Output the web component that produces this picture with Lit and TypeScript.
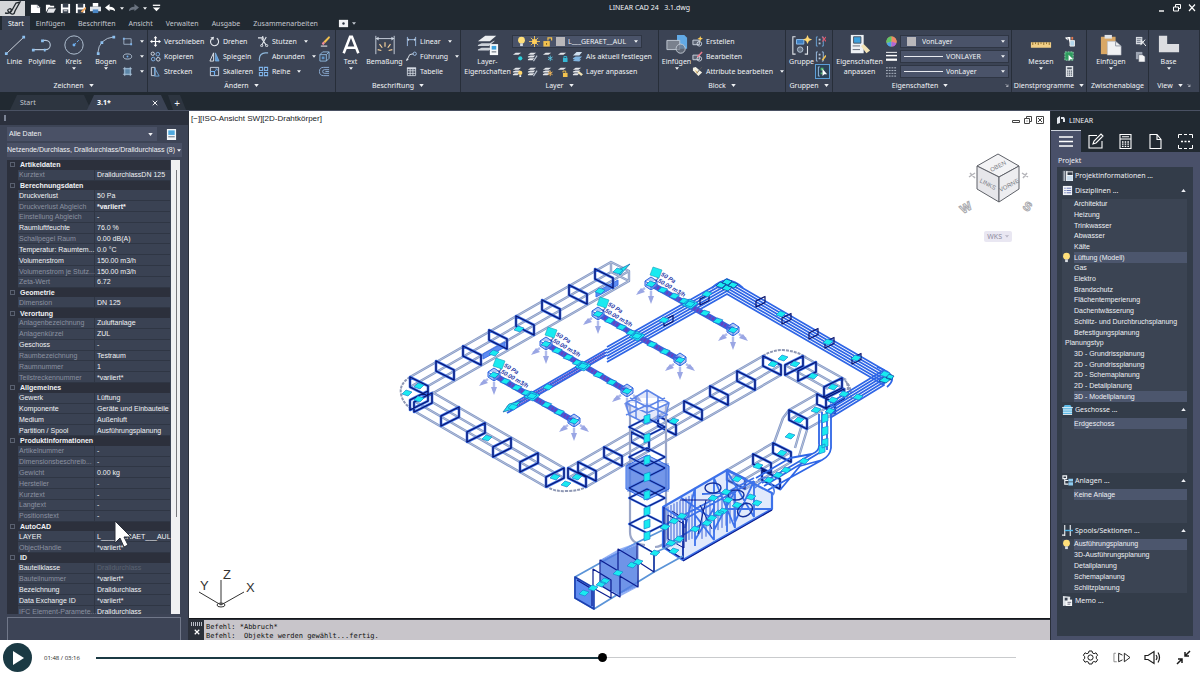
import { LitElement, html, svg, css, nothing, SVGTemplateResult } from "lit";
import { customElement, property, state } from "lit/decorators.js";
import { classMap } from "lit/directives/class-map.js";
import { styleMap } from "lit/directives/style-map.js";

/* ---------- icons ---------- */

const sheets = svg`<path d="M1 4l3-2h6l-3 2zM1 6l3-1h5l-2 2H1zM1 9l2-1h5l-2 2H1z" fill="#e4e6ea"/>`;

const SMALL: Record<string, SVGTemplateResult> = {
  rect: svg`<path d="M2 3h8v6H2z" fill="none" stroke="#9fb0c6"/><path d="M1 2h2v2H1zM9 8h2v2H9z" fill="#7fb4ea"/>`,
  ellipse: svg`<ellipse cx="6" cy="6" rx="4.5" ry="2.8" fill="none" stroke="#b8c8da"/><circle cx="6" cy="6" r="1" fill="#6fb0f0"/>`,
  hatch: svg`<path d="M2 2h8v8H2z" fill="#5b86a8"/><path d="M1 3h10M1 9h10M3 1v10M9 1v10" stroke="#b9cce0" stroke-width=".8"/>`,
  move: svg`<path d="M6 1.500v9M1.500 6h9" stroke="#fff" stroke-width="1.300"/><path d="M6 0l2 2.500H4zM6 12l2-2.500H4zM0 6l2.500-2v4zM12 6L9.500 4v4z" fill="#fff"/>`,
  copy: svg`<g fill="none"><circle cx="3" cy="3" r="1.800" stroke="#d5dbe4"/><circle cx="8.500" cy="3.500" r="2" stroke="#7fb4ea"/><circle cx="3.500" cy="8.800" r="2" stroke="#7fb4ea"/><circle cx="9" cy="9" r="2" stroke="#d5dbe4"/></g>`,
  stretch: svg`<path d="M1.500 1.500h4v9h-4z" fill="none" stroke="#cfd7e2"/><path d="M5 2l5 9H5z" fill="none" stroke="#6fa8dc"/>`,
  rotate: svg`<path d="M8.500 2.500A4.400 4.400 0 1 1 3 3" fill="none" stroke="#e4e8ee" stroke-width="1.200"/><path d="M1.500 1.500l4-.8-.8 3.800z" fill="#e4e8ee"/>`,
  mirror: svg`<path d="M5 2v9H1z" fill="none" stroke="#e4e8ee"/><path d="M7 2v9h4z" fill="#5c9ad6" stroke="#8cc0f0" stroke-width=".7"/>`,
  scale: svg`<path d="M1.500 1.500h9v9h-9z" fill="none" stroke="#cfd7e2"/><path d="M1.500 6h4.500v4.500" fill="none" stroke="#6fb0f0" stroke-width="1.300"/><path d="M6.500 5.500l2-2M7 3.200h2v2" stroke="#6fb0f0" fill="none" stroke-width=".8"/>`,
  trim: svg`<path d="M0 2h5M5 0l1 4M9 1L4 10M4 3l5 7" stroke="#e4e8ee" stroke-width="1.200"/><circle cx="4" cy="10.500" r="1.200" fill="none" stroke="#e4e8ee"/><circle cx="9.500" cy="10.500" r="1.200" fill="none" stroke="#e4e8ee"/>`,
  fillet: svg`<path d="M1.500 11V8Q2 2.500 8 2h3" fill="none" stroke="#8fb8dc" stroke-width="1.200"/>`,
  array: svg`<path d="M1.500 1.500h3.500v3.500H1.500zM7 1.500h3.500v3.500H7zM1.500 7h3.500v3.500H1.500zM7 7h3.500v3.500H7z" fill="none" stroke="#7fb4ea" stroke-width="1.100"/>`,
  erase: svg`<path d="M11 0L5 6l1.500 2L12 2z" fill="#f2c14e"/><path d="M5 6l1.500 2-2 2L3 8z" fill="#f08a9a"/><path d="M2 11h7" stroke="#fff"/>`,
  explode: svg`<path d="M1 4h7v7H1zM1 4l3-3h7L8 4M11 1v7l-3 3" fill="none" stroke="#8fb9df"/><path d="M3 6h3v3H3z" fill="#5f93c5"/>`,
  offset: svg`<path d="M11 1.500H5a4 4 0 0 0 0 9h6M11 4H6a2 2 0 0 0 0 4h5M11 6H7" fill="none" stroke="#8fb0d8"/>`,
  dimlin: svg`<path d="M1.500 1v10M10.500 1v10M2 4h8" stroke="#9fc0e6" fill="none"/><path d="M3 2.500v3L1.500 4zM9 2.500v3L10.500 4z" fill="#e4e8ee"/>`,
  leader: svg`<path d="M1 10l3-6 4-1" fill="none" stroke="#e4e8ee"/><circle cx="9.500" cy="3" r="1.800" fill="none" stroke="#9fc0e6"/><path d="M0 11l1-3 2 1.500z" fill="#e4e8ee"/>`,
  table: svg`<path d="M1.500 2.500h9v8h-9zM1.500 5.200h9M1.500 8h9M4.500 2.500v8M7.500 2.500v8" fill="none" stroke="#d5dbe4" stroke-width=".9"/><path d="M1 1.500h10v2H1z" fill="#d5dbe4"/>`,
  layOff: svg`<path d="M1 4l3-2h6l-3 2z" fill="#e4e6ea"/><circle cx="9" cy="8" r="2.300" fill="#2bd0dc"/>`,
  layIso: svg`${sheets}<path d="M11 5l-4 6" stroke="#b9c2cf" stroke-width="1.300"/>`,
  layFrz: svg`<path d="M1 4l3-2h6l-3 2z" fill="#e4e6ea"/><path d="M9 5v6M6.500 6.500l5 3M6.500 9.500l5-3" stroke="#5cc3e0"/>`,
  layLck: svg`<path d="M1 4l3-2h6l-3 2z" fill="#e4e6ea"/><path d="M6.500 7.500h5V12h-5z" fill="#35b8d6"/><path d="M7.500 7.500V6h3v1.500" stroke="#35b8d6" fill="none"/>`,
  layCur: svg`<path d="M1 5l4-4h6L8 5z" fill="#cfe0ef"/><path d="M1 8l3-2h7L8 9H1zM1 11l2-2h7l-2 2.500z" fill="#7fb4e0"/>`,
  layOn: svg`${sheets}<circle cx="9" cy="7.500" r="2.300" fill="#ffd56b"/><path d="M8 10h2v2H8z" fill="#eee"/>`,
  layThw: svg`${sheets}<path d="M9 5v6M6.500 6.500l5 3M6.500 9.500l5-3" stroke="#f5b95b"/>`,
  layUnl: svg`<path d="M1 4l3-2h6l-3 2z" fill="#e4e6ea"/><path d="M6.500 7.500h5V12h-5z" fill="#f2c14e"/><path d="M6.500 7V5.500h3v2" stroke="#f2c14e" fill="none"/>`,
  layMat: svg`${sheets}<path d="M6 7l4 4 2-2-4-3z" fill="#f3e3b5"/>`,
  create: svg`<path d="M1 4.500h7v5H1z" fill="#5c6474" stroke="#cfd7e2"/><circle cx="8" cy="8.500" r="2.500" fill="none" stroke="#cfd7e2"/><path d="M9 0l.8 2L12 3l-2.200.8L9 6l-.8-2.200L6 3l2.200-1z" fill="#ffcf5a"/>`,
  editb: svg`<path d="M1 4.500h7v5H1z" fill="#5c6474" stroke="#cfd7e2"/><circle cx="8" cy="8.500" r="2.500" fill="none" stroke="#cfd7e2"/><path d="M11 1L6 6.500" stroke="#ec7a8c" stroke-width="1.600"/>`,
  attr: svg`<path d="M1 2l3-1 7 6-4 4-6-6z" fill="#f4f1e4"/><path d="M11 1L5 8" stroke="#5a5a5a"/><path d="M4 5l2 3" stroke="#d9a441"/>`,
  ungroup: svg`<path d="M3 1H1.500v10H3M7.500 1H9v10H7.500" fill="none" stroke="#6fa8dc"/><path d="M4 3h2v2H4zM4 7h2v2H4z" fill="#b7c6d8"/><path d="M8 1l4 5M12 1L8 6" stroke="#e0566b" stroke-width="1.200"/>`,
  grpEdit: svg`<path d="M3 1H1.500v10H3M7.500 1H9v10H7.500" fill="none" stroke="#9fc4ea"/><path d="M4 3h2v2H4zM4 7h2v2H4z" fill="#b7c6d8"/><path d="M12 5l-4 5" stroke="#f2c14e" stroke-width="1.700"/>`,
  grpSel: svg`<path d="M3 1H1.500v10H3" fill="none" stroke="#9fc4ea"/><path d="M4 2h3v3H4zM4 7h2v2H4z" fill="#4fb86f"/><path d="M6 3v8l2-2h3z" fill="#fff"/>`,
  wheel: svg`<circle cx="6" cy="6" r="5.500" fill="#f2c14e"/><path d="M6 6L6 .5A5.500 5.500 0 0 1 11.300 7.500z" fill="#f0876a"/><path d="M6 6L.7 7.500A5.500 5.500 0 0 1 6 .5z" fill="#5ec46a"/><path d="M6 6L.7 7.500A5.500 5.500 0 0 0 6 11.500z" fill="#4aa3e8"/><path d="M6 6v5.500A5.500 5.500 0 0 0 11.300 7.500z" fill="#b266d6"/>`,
  weight: svg`<path d="M0 1.500h12" stroke="#fff"/><path d="M0 5h12" stroke="#fff" stroke-width="1.600"/><path d="M0 9.500h12" stroke="#fff" stroke-width="2.400"/>`,
  dashes: svg`<path d="M0 2h12M0 5h12M0 8h12M0 11h12" stroke="#b9c2cf" stroke-dasharray="2 1"/>`,
  selcopy: svg`<path d="M1 2l3-1v4zM4 1h3v8z" fill="#fff"/><path d="M6.500 5h5v6h-5z" fill="#b3d6ec" stroke="#eee"/><path d="M8 1h2v3H8z" fill="#e87b52"/>`,
  selall: svg`<path d="M1 1h9v9H1z" fill="#2f9b5f" stroke="#8fd6ae" stroke-dasharray="2 1"/><path d="M5 4v7l2-2h3z" fill="#fff"/>`,
  calc: svg`<path d="M2 0h8v12H2z" fill="#dfe3e8"/><path d="M3.500 1.500h5v2h-5z" fill="#515a68"/><path d="M3.500 5h1.200v1.200H3.500zM5.500 5h1.200v1.200H5.500zM7.500 5h1.200v1.200H7.500zM3.500 7.200h1.200v1.200H3.500zM5.500 7.200h1.200v1.200H5.500zM7.500 7.200h1.200v1.200H7.500zM3.500 9.400h1.200v1.200H3.500zM5.500 9.400h1.200v1.200H5.500zM7.500 9.400h1.200v1.200H7.500z" fill="#515a68"/>`,
  cut: svg`<path d="M1 1h7v8H1z" fill="#d9dde3"/><path d="M2 3h5M2 5h4M2 7h4" stroke="#6b7484"/><path d="M11 4L6 10M7 5l5 6" stroke="#fff"/>`,
  paste: svg`<path d="M1 1h7v8H1z" fill="#9da5b3"/><path d="M4 4h4l3 2v6H4z" fill="#f3f4f6" stroke="#4b5261" stroke-width=".6"/>`,
  bulb: svg`<circle cx="6" cy="4.500" r="3.700" fill="#ffdf7a"/><path d="M4.500 8h3v3h-3z" fill="#d9dde3"/>`,
  sun: svg`<circle cx="6" cy="6" r="2.800" fill="#ffcf5a"/><path d="M6 0v12M0 6h12M2 2l8 8M10 2l-8 8" stroke="#ffcf5a" stroke-width=".9"/>`,
  lock: svg`<path d="M1.500 5.500h7v6h-7z" fill="#f2c14e"/><path d="M6.500 5V2h4v3" fill="none" stroke="#f2c14e" stroke-width="1.300"/><path d="M4.500 7.500h1v2h-1z" fill="#6b5420"/>`,
  newf: svg`<path d="M1 2h7l3 3v6H1z" fill="#fff"/><path d="M8 2v3h3" fill="none" stroke="#79818d" stroke-width=".7"/>`,
  open: svg`<path d="M1 10V2h4l1 1h4v2H4z" fill="#fff"/><path d="M4 6h8l-2.500 4.500H2z" fill="#e4e6ea"/>`,
  save: svg`<path d="M1 1h10v10H1z" fill="#fff"/><path d="M3 1h6v4H3zM3 7h6v4H3z" fill="#38414e"/><path d="M4 8.500h4" stroke="#fff"/>`,
  saveas: svg`<path d="M1 1h10v10H1z" fill="#fff"/><path d="M3 1h6v4H3zM3 7h6v4H3z" fill="#38414e"/><path d="M12 5l-5 5" stroke="#f1a65c" stroke-width="2"/>`,
  print: svg`<path d="M3 0h6v4H3z" fill="#fff"/><path d="M0 4h12v5H0z" fill="#dfe3e8"/><path d="M3 7h6v4H3z" fill="#4a86c4"/>`,
  undo: svg`<path d="M0 5l5-4v3q6 0 6 5Q9 7 5 7v2z" fill="#fff"/>`,
  redo: svg`<path d="M12 5L7 1v3Q1 4 1 9q2-2 6-2v2z" fill="#69727f"/>`,
  qat: svg`<path d="M2 2.500h8" stroke="#fff" stroke-width="1.400"/><path d="M2 5h8L6 9z" fill="#fff"/>`,
  toggle: svg`<path d="M1 2h10v8H1z" fill="#f1f2f4"/><circle cx="6" cy="6" r="1.300" fill="#2b3340"/>`,
  quick: svg`<path d="M1 0h10v12H1z" fill="#f3f6f9"/><path d="M2.500 1.500h7v5h-7z" fill="#4ea8de"/><path d="M2.500 8.500h7" stroke="#5b6574"/>`,
};

const BIG: Record<string, SVGTemplateResult> = {
  line: svg`<path d="M3 21L21 4" stroke="#d5dbe4" fill="none"/><path d="M1 20h3v3H1zM20 2h3v3h-3z" fill="#8cc0f0"/>`,
  pline: svg`<path d="M3 17h13a5 5 0 0 0 0-10h-3" stroke="#b8c8da" fill="none" stroke-width="1.200"/><path d="M1 16h3v3H1zM14 16h2v3h-2zM11 6h3v3h-3z" fill="#8cc0f0"/>`,
  circle: svg`<circle cx="12" cy="12" r="10" stroke="#b8c8da" fill="none"/><path d="M12 12l6-6" stroke="#6fb0f0" stroke-dasharray="3 1.500"/><circle cx="12" cy="12" r="1.600" fill="#6fb0f0"/>`,
  arc: svg`<path d="M3 21Q4 5 21 3" stroke="#b8c8da" fill="none"/><path d="M2 20h3v3H2zM6 8h3v3H6zM19 2h3v3h-3z" fill="#8cc0f0"/>`,
  text: svg`<path d="M4 21L11 3h2l7 18M7 15h10" stroke="#fff" stroke-width="2.800" fill="none"/>`,
  dim: svg`<path d="M2 2v20M22 2v20M2 5h20" stroke="#cfd7e2"/><path d="M12 9v5M6 11l3 4M18 11l-3 4M4 17l4 1M20 17l-4 1" stroke="#f3cf9a" stroke-width="1.300"/><path d="M2 5l3-2v4zM22 5l-3-2v4z" fill="#cfd7e2"/>`,
  layers: svg`<path d="M1 8l8-6h12l-7 6z" fill="#eceef1"/><path d="M1 12l4-2h9l5-3v1l-6 5H1zM1 17l4-2h9l3-2v2l-4 3H1z" fill="#cdd2d9"/><path d="M14 11h9v12h-9z" fill="#f5f7f9"/><path d="M16 13h5v4h-5z" fill="#3ca0dd"/><path d="M16 19.500h5" stroke="#4a5261"/>`,
  insert: svg`<path d="M12 1h8l3 3v12H12z" fill="#62aae6"/><path d="M1 7h14v10H1z" fill="#7a818d" stroke="#c3cad4"/><circle cx="16" cy="16" r="5" fill="#6d7582" fill-opacity=".7" stroke="#c3cad4"/>`,
  group: svg`<path d="M5 3H2v19h3M15 22h3v-9" fill="none" stroke="#dfe3e8" stroke-width="1.200"/><path d="M6 6h8v5H6z" fill="#3f7fc0" stroke="#8cc0f0"/><circle cx="10" cy="17" r="3" fill="#697484" stroke="#b8c8da"/><path d="M18 1l1.500 3.500L23 6l-3.500 1.500L18 11l-1.500-3.500L13 6l3.500-1.500z" fill="#ffd873"/>`,
  match: svg`<path d="M2 1h14v20H2z" fill="#eef1f4"/><path d="M5 3h8v7H5z" fill="#3ca0dd" stroke="#46505e"/><path d="M4 13h8M4 17h8" stroke="#5b6574"/><path d="M13 13l6 8 4-3-7-7z" fill="#f3e3b5"/>`,
  ruler: svg`<path d="M1 9h22v6H1z" fill="#f2cf86"/><path d="M3 9v3M6 9v2M9 9v3M12 9v2M15 9v3M18 9v2M21 9v3" stroke="#8a6a2a"/>`,
  pasteBig: svg`<path d="M1 3h16v19H1z" fill="#d9a765"/><path d="M5 1h8v4H5z" fill="#dfe3e8"/><path d="M8 8h9l6 5v10H8z" fill="#f0f1f3" stroke="#aab1bb" stroke-width=".6"/><path d="M17 8v5h6" fill="none" stroke="#8b93a0"/>`,
  base: svg`<path d="M1 2h9v9h13v9H1z" fill="#dcdde1"/>`,
};

const ico = (n: string) => html`<svg class="ico" viewBox="0 0 12 12" aria-hidden="true">${SMALL[n]}</svg>`;
const big = (n: string) => html`<svg class="icoBig" viewBox="0 0 24 24" aria-hidden="true">${BIG[n]}</svg>`;
const caret = html`<svg class="caret" viewBox="0 0 6 4" aria-hidden="true"><path d="M0 0h6L3 4z" fill="currentColor" /></svg>`;

const shared = css`
  * { box-sizing: border-box; }
  button, select, input { font: inherit; color: inherit; background: none; border: 0; padding: 0; margin: 0; }
  button { display: flex; align-items: center; white-space: nowrap; }
  select { appearance: none; min-width: 0; text-overflow: ellipsis; outline: none; }
  .ico { width: 11px; height: 11px; flex: none; display: block; }
  .icoBig { width: 22px; height: 22px; flex: none; display: block; }
  .caret { width: 4px; height: 3px; flex: none; display: block; }
`;

/* ---------- ribbon ---------- */

@customElement("cad-ribbon")
class CadRibbon extends LitElement {
  static styles = [shared, css`
    :host { display: block; background: #212931; color: #f1f3f6; font: 7px/10px "Noto Sans", sans-serif; }
    .title { display: grid; grid-template-columns: minmax(0, 609fr) minmax(0, 591fr); height: 16px; align-items: center; }
    .qat { display: flex; align-items: center; gap: 4px; }
    .logo { width: 25px; height: 15px; background: #d4d6d9; display: flex; justify-content: center; margin-right: 1px; }
    .logo svg { width: 20px; height: 15px; }
    .name { display: flex; justify-content: space-between; align-items: center; white-space: pre; padding-right: 3px; }
    .win { display: flex; gap: 5px; }
    .win svg { width: 10px; height: 10px; display: block; }
    .tabs { display: flex; height: 14px; padding-left: 2px; align-items: stretch; color: #c3c8d0; }
    .tab { padding: 2px 6px 0; margin-right: 1px; }
    .tab.on { background: #3b4354; color: #fff; margin-right: 0; }
    .tabs .ico { margin-left: 13px; margin-right: 3px; }
    .panels { display: grid; height: 62px; background: #3b4354;
      grid-template-columns: minmax(0,148fr) minmax(0,188fr) minmax(0,125fr) minmax(0,198fr) minmax(0,127fr) minmax(0,47fr) minmax(0,179fr) minmax(0,75fr) minmax(0,62fr) minmax(0,51fr); }
    .panel { border-right: 1px solid #272e39; display: flex; flex-direction: column; padding: 4px 2px 0; min-width: 0; }
    .body { display: grid; height: 45px; }
    .end { display: flex; height: 13px; justify-content: center; align-items: center; }
    .foot { gap: 5px; }
    .foot .caret { width: 5px; }
    .launch { margin-left: 4px; }
    .props + .end .foot { margin-left: auto; }
    .props + .end .launch { margin-left: auto; }
    .stack { display: grid; grid-template-rows: repeat(3, 15px); align-items: center; min-width: 0; }
    .row, .sm { display: flex; align-items: center; gap: 3px; }
    .sm { height: 15px; }
    .sm .caret { margin-left: 4px; }
    .sm.hot { outline: 1px solid #5c9fd8; outline-offset: -1px; background: #2c4258; width: 15px; justify-content: center; }
    .bigb { flex-direction: column; justify-content: flex-start; text-align: center; white-space: pre; }
    .bigb .icoBig { margin-bottom: 1px; }
    .draw { grid-template-columns: 25px 30px 33px 32px auto; }
    .modify { grid-template-columns: 59px 49px 61px auto; }
    .annot { grid-template-columns: 25px 43px auto; }
    .layer { grid-template-columns: 49px auto; }
    .block { grid-template-columns: 31px auto; }
    .groups { grid-template-columns: 27px auto; }
    .props { grid-template-columns: 49px auto; column-gap: 2px; }
    .util { grid-template-columns: 50px auto; }
    .util .bigb { padding-left: 4px; }
    .clip { grid-template-columns: 44px auto; column-gap: 2px; }
    .view { grid-template-columns: 35px; }
    .pick { display: flex; align-items: center; background: #4a5369; border: 1px solid #2f3644; height: 13px; padding: 0 3px; gap: 3px; flex: 1; min-width: 0; }
    .pick select { flex: 1; }
    .pick.lay { flex: none; width: 130px; gap: 2px; }
    .pick .sw { width: 9px; height: 9px; background: #b9b7ba; flex: none; margin: 0 3px; }
    .pick.lay .sw { margin: 0 1px; }
    .pick .rule { width: 39px; height: 1px; background: #e9ebf0; flex: none; }
    .quad { display: flex; gap: 4px; align-items: center; }
    .docs { display: flex; height: 19px; padding: 3px 0 0 10px; border-bottom: 1px solid #4a5163; }
    .doc { width: 81px; background: #2d3540; clip-path: polygon(7px 0, 74px 0, 100% 100%, 0 100%); padding: 0 10px; color: #c3c8d0; }
    .doc.on { background: #3b4354; color: #fff; font-weight: 700; justify-content: space-between; margin-left: -4px; }
    .doc svg { width: 6px; height: 6px; }
    .add { width: 18px; background: #2d3540; clip-path: polygon(0 0, 12px 0, 100% 100%, 5px 100%); justify-content: center; font-size: 10px; }
  `];

  private tabs = ["Start", "Einfügen", "Beschriften", "Ansicht", "Verwalten", "Ausgabe", "Zusammenarbeiten"];

  private sm(icon: string, label = "", drop = false, hot = false) {
    return html`<button class=${classMap({ sm: true, hot })} aria-label=${label || icon}>${ico(icon)}${label ? html`<span>${label}</span>` : nothing}${drop ? caret : nothing}</button>`;
  }
  private bg(icon: string, label: string, drop = false) {
    return html`<button class="bigb">${big(icon)}<span>${label}</span>${drop ? caret : nothing}</button>`;
  }
  private pick(label: string, value: string, lead: unknown, cls = "") {
    return html`<label class="pick ${cls}">${lead}<select aria-label=${label}><option>${value}</option></select>${caret}</label>`;
  }
  private panel(cls: string, title: string, body: unknown, drop = true, launch = false) {
    return html`<section class="panel"><div class="body ${cls}">${body}</div>
      <div class="end"><button class="foot">${title}${drop ? caret : nothing}</button>${launch
        ? html`<button class="launch" aria-label=${title}><svg class="caret" viewBox="0 0 6 6"><path d="M0 0l5 5M5 1v4H1" fill="none" stroke="currentColor" /></svg></button>` : nothing}</div></section>`;
  }

  render() {
    return html`
      <div class="title">
        <div class="qat">
          <div class="logo"><svg viewBox="0 0 20 15"><path d="M2 12q5 1 6-2t-2-2 1 4 5-2l5-9-4 1-5 9" fill="none" stroke="#23292f" stroke-width="1.300" /></svg></div>
          ${["newf", "open", "save", "saveas", "print", "undo"].map(ico)}${caret}${ico("redo")}${caret}${ico("qat")}
        </div>
        <div class="name"><span>LINEAR CAD 24   3.1.dwg</span>
          <div class="win">
            <button aria-label="Minimieren"><svg viewBox="0 0 10 10"><path d="M2 8h5" stroke="#fff" stroke-width="1.400" /></svg></button>
            <button aria-label="Wiederherstellen"><svg viewBox="0 0 10 10"><path d="M1.500 4h5v4h-5zM3.500 4V1.500h5v4H7" fill="none" stroke="#fff" /></svg></button>
            <button aria-label="Schließen"><svg viewBox="0 0 10 10"><path d="M2 1.500l6 6.500M8 1.500L2 8" stroke="#fff" stroke-width="1.200" /></svg></button>
          </div>
        </div>
      </div>
      <nav class="tabs">${this.tabs.map((t, i) => html`<button class=${classMap({ tab: true, on: i === 0 })}>${t}</button>`)}<button aria-label="Ribbon">${ico("toggle")}${caret}</button></nav>
      <div class="panels">
        ${this.panel("draw", "Zeichnen", html`${this.bg("line", "Linie")}${this.bg("pline", "Polylinie")}${this.bg("circle", "Kreis", true)}${this.bg("arc", "Bogen", true)}
          <div class="stack">${this.sm("rect", "", true)}${this.sm("ellipse", "", true)}${this.sm("hatch", "", true)}</div>`)}
        ${this.panel("modify", "Ändern", html`
          <div class="stack">${this.sm("move", "Verschieben")}${this.sm("copy", "Kopieren")}${this.sm("stretch", "Strecken")}</div>
          <div class="stack">${this.sm("rotate", "Drehen")}${this.sm("mirror", "Spiegeln")}${this.sm("scale", "Skalieren")}</div>
          <div class="stack">${this.sm("trim", "Stutzen", true)}${this.sm("fillet", "Abrunden", true)}${this.sm("array", "Reihe", true)}</div>
          <div class="stack">${this.sm("erase")}${this.sm("explode")}${this.sm("offset")}</div>`)}
        ${this.panel("annot", "Beschriftung", html`${this.bg("text", "Text", true)}${this.bg("dim", "Bemaßung")}
          <div class="stack">${this.sm("dimlin", "Linear", true)}${this.sm("leader", "Führung", true)}${this.sm("table", "Tabelle")}</div>`)}
        ${this.panel("layer", "Layer", html`${this.bg("layers", "Layer-\nEigenschaften")}
          <div class="stack">${this.pick("Layer", "L___GERAET__AUL", html`${ico("bulb")}${ico("sun")}${ico("lock")}<i class="sw"></i>`, "lay")}
            <div class="quad">${["layOff", "layIso", "layFrz", "layLck"].map((n) => this.sm(n))}${this.sm("layCur", "Als aktuell festlegen")}</div>
            <div class="quad">${["layOn", "layIso", "layThw", "layUnl"].map((n) => this.sm(n))}${this.sm("layMat", "Layer anpassen")}</div></div>`)}
        ${this.panel("block", "Block", html`${this.bg("insert", "Einfügen", true)}
          <div class="stack">${this.sm("create", "Erstellen")}${this.sm("editb", "Bearbeiten")}${this.sm("attr", "Attribute bearbeiten", true)}</div>`)}
        ${this.panel("groups", "Gruppen", html`${this.bg("group", "Gruppe")}
          <div class="stack">${this.sm("ungroup")}${this.sm("grpEdit")}${this.sm("grpSel", "", false, true)}</div>`)}
        ${this.panel("props", "Eigenschaften", html`${this.bg("match", "Eigenschaften\nanpassen")}
          <div class="stack">
            <div class="row">${ico("wheel")}${this.pick("Farbe", "VonLayer", html`<i class="sw"></i>`)}</div>
            <div class="row">${ico("weight")}${this.pick("Linienstärke", "VONLAYER", html`<i class="rule"></i>`)}</div>
            <div class="row">${ico("dashes")}${this.pick("Linientyp", "VonLayer", html`<i class="rule"></i>`)}</div></div>`, true, true)}
        ${this.panel("util", "Dienstprogramme", html`${this.bg("ruler", "Messen", true)}
          <div class="stack">${this.sm("selcopy")}${this.sm("selall")}${this.sm("calc")}</div>`)}
        ${this.panel("clip", "Zwischenablage", html`${this.bg("pasteBig", "Einfügen", true)}
          <div class="stack">${this.sm("cut")}${this.sm("paste")}</div>`, false)}
        ${this.panel("view", "View", html`${this.bg("base", "Base", true)}`, true, true)}
      </div>
      <div class="docs">
        <button class="doc">Start</button>
        <button class="doc on">3.1*<svg viewBox="0 0 8 8"><path d="M1 1l6 6M7 1L1 7" stroke="#fff" stroke-width="1.200" /></svg></button>
        <button class="add">+</button>
      </div>`;
  }
}

/* ---------- property palette ---------- */

type Row = [string, string?, string?];
const ROWS: Row[] = [
  ["Artikeldaten"], ["Kurztext", "DralldurchlassDN 125", "d"],
  ["Berechnungsdaten"], ["Druckverlust", "50 Pa"], ["Druckverlust Abgleich", "*variiert*", "db"], ["Einstellung Abgleich", "-", "d"],
  ["Raumluftfeuchte", "76.0 %"], ["Schallpegel Raum", "0.00 dB(A)", "d"], ["Temperatur: Raumtem...", "0.0 °C"], ["Volumenstrom", "150.00 m3/h"],
  ["Volumenstrom je Stutz...", "150.00 m3/h", "d"], ["Zeta-Wert", "6.72", "d"],
  ["Geometrie"], ["Dimension", "DN 125", "d"],
  ["Verortung"], ["Anlagenbezeichnung", "Zuluftanlage", "d"], ["Anlagenkürzel", "ZUL", "d"], ["Geschoss", "-"], ["Raumbezeichnung", "Testraum", "d"],
  ["Raumnummer", "1", "d"], ["Teilstreckennummer", "*variiert*", "d"],
  ["Allgemeines"], ["Gewerk", "Lüftung"], ["Komponente", "Geräte und Einbauteile"], ["Medium", "Außenluft"], ["Partition / Spool", "Ausführungsplanung"],
  ["Produktinformationen"], ["Artikelnummer", "-", "d"], ["Dimensionsbeschreib...", "-", "d"], ["Gewicht", "0.00 kg", "d"], ["Hersteller", "-", "d"],
  ["Kurztext", "-", "d"], ["Langtext", "-", "d"], ["Positionstext", "-", "d"],
  ["AutoCAD"], ["LAYER", "L____GERAET___AUL"], ["ObjectHandle", "*variiert*", "d"],
  ["ID"], ["Bauteilklasse", "Dralldurchlass", "g"], ["Bauteilnummer", "*variiert*", "d"], ["Bezeichnung", "Dralldurchlass"],
  ["Data Exchange ID", "*variiert*"], ["IFC Element-Paramete...", "Dralldurchlass", "d"],
];

@customElement("property-palette")
class PropertyPalette extends LitElement {
  static styles = [shared, css`
    :host { display: flex; flex-direction: column; position: relative; width: 189px; background: #3d4456; border-right: 1px solid #2a2f3a; color: #f1f2f5;
      font: 7px/10px "Liberation Sans", sans-serif; min-height: 0; }
    .grip { height: 14px; background: #2b303d; padding: 4px; flex: none; }
    .grip i { display: block; width: 2px; height: 6px; background: #7c8496; }
    .top { display: flex; align-items: center; gap: 9px; padding: 2px 11px 0 7px; }
    .pick { display: flex; align-items: center; height: 14px; background: #4a5166; padding: 0 4px 0 2px; flex: 1; min-width: 0; }
    .pick select { flex: 1; }
    .pick.all { flex: none; margin: 2px 6px 3px 7px; padding: 0 1px 0 0; }
    .pick.all select { text-overflow: clip; }
    .caret { width: 5px; height: 3px; }
    .pick.all .caret { width: 4px; }
    .list { flex: 1; min-height: 0; display: flex; margin: 0 8px 0 7px; overflow: hidden; }
    table { width: 163px; height: 457px; border-collapse: separate; border-spacing: 0; table-layout: fixed; flex: none; background: #3a4253; }
    .g { width: 11px; } .l { width: 76px; }
    td, th { padding: 0 0 0 2px; border: 0; border-bottom: 1px solid #2f3644; line-height: 9px; white-space: nowrap; text-align: left; font-weight: 400; }
    th { padding-left: 1px; }
    td { border-left: 1px solid #2f3644; }
    .grp, .mark { background: #2c303c; border: 0; }
    .grp { font-weight: 700; padding-left: 2px; }
    .mark { padding: 0 3px; }
    .mark i { display: block; width: 5px; height: 5px; border: 1px solid #59606f; }
    .dim { color: #8b91a0; }
    .bold { font-weight: 700; }
    .ghost { color: #5b6272; }
    .bar { width: 10px; background: #f0f0f2; margin-left: 1px; padding: 10px 3px 97px 5px; }
    .bar i { display: block; height: 100%; border-left: 1px solid #77777c; }
    .desc { height: 23px; margin: 3px 7px 0; border: 1px solid #707789; border-bottom: 0; flex: none; }
    .pointer { position: absolute; left: 114px; top: 409px; width: 17px; height: 29px; }
  `];
  render() {
    return html`
      <div class="grip"><i></i></div>
      <div class="top"><label class="pick"><select aria-label="Filter"><option>Alle Daten</option></select>${caret}</label><button aria-label="Schnellauswahl">${ico("quick")}</button></div>
      <label class="pick all"><select aria-label="Auswahl"><option>Netzende/Durchlass, Dralldurchlass/Dralldurchlass (8)</option></select>${caret}</label>
      <div class="list">
        <table><colgroup><col class="g" /><col class="l" /><col /></colgroup><tbody>
          ${ROWS.map(([k, v, f = ""]) => v === undefined
            ? html`<tr><td class="mark"><i></i></td><th class="grp" colspan="2">${k}</th></tr>`
            : html`<tr><td class="mark"></td><th class=${classMap({ dim: f.includes("d") })}>${k}</th><td class=${classMap({ bold: f.includes("b"), ghost: f === "g" })}>${v}</td></tr>`)}
        </tbody></table>
        <div class="bar"><i></i></div>
      </div>
      <div class="desc"></div>
      <svg class="pointer" viewBox="0 0 17 29"><path d="M1 1v22l5-5 4 9 4-2-4-8h7z" fill="#fff" stroke="#2a2f3a" /></svg>`;
  }
}

/* ---------- drawing ---------- */

type P = [number, number];
const lerp = (a: P, b: P, t: number): P => [a[0] + (b[0] - a[0]) * t, a[1] + (b[1] - a[1]) * t];
const poly = (pts: P[], close = false) => "M" + pts.map((p) => p.join(" ")).join("L") + (close ? "z" : "");
const shifted = (pts: P[], dx: number, dy: number): P[] => pts.map(([x, y]) => [x + dx, y + dy]);

/* rectangular section frames; "fall" leans down to the right, "rise" up to the right */
const fall = (p: P, w = 18, h = 10) => poly([p, [p[0] + w, p[1] + w / 2], [p[0] + w, p[1] + w / 2 + h], [p[0], p[1] + h]], true);
const rise = (p: P, w = 18, h = 10) => poly([p, [p[0] + w, p[1] - w / 2], [p[0] + w, p[1] - w / 2 + h], [p[0], p[1] + h]], true);
const run = (a: P, b: P, s: number) => [[0, 0], [18, 9 * s], [0, 10], [18, 9 * s + 10]].map(([x, y]) => poly(shifted([a, b], x, y))).join("");
const tile = ([x, y]: P, w = 5, h = 3) => poly([[x - w, y + 1], [x - 1, y - h], [x + w, y - 1], [x + 1, y + h]], true);
const post = ([x, y]: P) => poly([[x - 3, y - 3], [x + 3, y - 5], [x + 3, y + 3], [x - 3, y + 5]], true);
const rhomb = (y: number, x = 647, w = 18, h = 9) => poly([[x, y - h], [x + w, y], [x, y + h], [x - w, y]], true);

const FALLS: P[] = [
  [595, 269], [569, 285], [542, 300], [516, 316], [489, 330], [463, 346], [436, 361], [410, 377],
  [568, 468], [578, 462], [604, 447], [631, 432], [658, 416], [684, 401], [710, 386], [737, 371], [763, 356],
  [817, 394], [789, 410], [773, 443], [753, 454], [727, 470], [762, 470],
];
const RISES: P[] = [
  [410, 400], [414, 402], [441, 416], [467, 432], [493, 447], [520, 462], [546, 477],
  [785, 365], [798, 371], [824, 387], [826, 398],
];
const FRAMES = FALLS.map((p) => fall(p)).join("") + RISES.map((p) => rise(p)).join("");
const LOOP = [
  run([410, 377], [611, 262], 1), fall([611, 262]), run([414, 401], [546, 477], -1), run([568, 468], [763, 356], 1),
  run([785, 365], [828, 389], -1), run([817, 394], [789, 410], 1), run([773, 443], [727, 470], 1),
  "M783 418L774 443M789 410L783 418M807 430L799 456M802 424L795 448",
].join("");
const ARCS = "M410 377Q399 384 401 394Q403 404 412 409M546 486Q554 492 567 491Q580 491 588 486M763 356Q772 350 783 350Q796 351 806 357M842 378Q852 385 851 398M847 383Q849 390 847 398";

/* supply air loop: bundle of parallel lines */
const bundle = (pts: P[], offs: number[]) => offs.map((o) => poly(shifted(pts, 0, o))).join("");
const SUPPLY: P[] = [[607, 353], [727, 285], [884, 376], [830, 409]];
const WIDE = [-6, -3, 0, 3, 6, 9];

const BRANCHES: [P, P, P][] = [
  [[651, 284], [690, 304], [733, 330]], [[598, 314], [637, 336], [680, 360]],
  [[546, 344], [583, 366], [627, 391]], [[494, 375], [532, 396], [574, 421]],
];
const terminal = ([x, y]: P, right: boolean) => svg`
  <path d="M${x - 6} ${y - 3}l6-4 6 4v5l-6 4-6-4zM${x - 6} ${y - 3}l6 4 6-4M${x} ${y + 1}v5" fill="#7da2f0" fill-opacity=".6" stroke="#2c62e0" />
  <g stroke="#b3bdec" stroke-width="2.400" fill="none"><path d="M${x} ${y + 7}v9" /><path d="M${x - 6} ${y + 4}l-7 5" />${right ? svg`<path d="M${x + 6} ${y + 4}l7 5" />` : nothing}</g>
  <g fill="#9aa6e4"><path d="M${x - 3} ${y + 12}h6l-3 8z" /><path d="M${x - 10} ${y + 4}l4 4-9 3z" />${right ? svg`<path d="M${x + 10} ${y + 4}l-4 4 9 3z" />` : nothing}</g>`;

const TILES: P[] = [
  [618, 271], [600, 291], [519, 329], [494, 353], [419, 386], [407, 393], [419, 399], [487, 438], [555, 477], [577, 477], [566, 484],
  [674, 421], [773, 364], [783, 358], [795, 364], [813, 376], [833, 387], [844, 394], [833, 400], [799, 420], [790, 436], [816, 410], [782, 453], [758, 466], [737, 479],
  [707, 294], [664, 320], [781, 314], [828, 342], [856, 358], [885, 374], [858, 397], [830, 411],
  [804, 461], [786, 470], [778, 475], [769, 480], [726, 492], [713, 498], [728, 500], [737, 505], [751, 497], [757, 503], [712, 518], [695, 529], [682, 516], [674, 521], [665, 527],
  [679, 539], [671, 543], [674, 551], [655, 553], [638, 562], [632, 565], [618, 573], [605, 581], [601, 584], [593, 588], [584, 593],
  [719, 513], [723, 511], [707, 523], [548, 387], [513, 407],
];
const POSTS: P[] = [[647, 419], [647, 438], [647, 460], [647, 477], [647, 495], [647, 511], [647, 524], [647, 536], [825, 418], [825, 431], [825, 443], [822, 449]];

const hatch = (x0: number, x1: number, top: (x: number) => number, bot: (x: number) => number, step = 3) => {
  let d = "";
  for (let x = x0; x <= x1; x += step) d += `M${x} ${top(x)}V${bot(x)}`;
  return d;
};
const RINGS = [427, 457, 468, 488, 498, 524].map((y) => rhomb(y)).join("");

@customElement("model-view")
class ModelView extends LitElement {
  static styles = [shared, css`
    :host { display: block; position: relative; background: #fff; overflow: hidden; min-width: 0; min-height: 0; font: 8px/10px "Liberation Sans", sans-serif; color: #16181c; }
    .scene { display: block; width: 100%; height: 100%; }
    .caption { position: absolute; left: 2px; top: 3px; }
    .winctl { position: absolute; right: 6px; top: 5px; display: flex; gap: 4px; }
    .winctl svg { width: 8px; height: 8px; display: block; }
    .ucs { position: absolute; right: 38px; top: 120px; height: 11px; background: #e9e7f2; color: #8e8ca0; padding: 0 3px; gap: 3px; font: 7px/10px "Noto Sans", sans-serif; border-radius: 2px; }
    .tag { font: italic 700 6px "Liberation Sans", sans-serif; fill: #2336a8; }
    .axis { font: 13px "Liberation Sans", sans-serif; fill: #333; }
    .cube { font: 6px "Liberation Sans", sans-serif; fill: #777b83; text-anchor: middle; }
    .wind { font: 700 12px "Liberation Sans", sans-serif; fill: #fff; stroke: #a9a9ae; stroke-width: 1; }
  `];

  private scene() {
    return svg`
      <g fill="none" stroke-linejoin="round">
        <path d=${LOOP} stroke="#7f97cc" stroke-width="2.400" />
        <path d=${LOOP} stroke="#c9ccd2" stroke-width=".8" />
        <path d=${ARCS} stroke="#8f98b4" stroke-width="2" stroke-dasharray="3 1" />
        <path d="M596 297l22-12v-5l-22 12zM483 359l22-12v-5l-22 12z" fill="#5f8cf0" stroke="#3d72ea" />
        <path d=${FRAMES} stroke="#3d72ea" stroke-width="2.600" />
        <path d=${FRAMES} stroke="#08146e" stroke-width="1.300" />

        <g stroke="#2f66e6" stroke-width="1.800">
          <path d=${bundle(SUPPLY, WIDE)} />
          <path d="M712 288Q727 273 743 288M718 288Q727 279 737 288M877 367Q901 375 887 387M880 373Q893 377 882 385" />
          <path d=${bundle([[507, 410], [607, 352]], [-3, 0, 3])} />
          <path d="M819 414V444M822 412V450M827 410V450M831 412V448M819 444Q820 451 812 454L762 483M831 448Q830 456 822 460L768 490M824 450L764 486M812 454L790 458L756 478M822 460L800 466L780 490" />
        </g>
        <path d=${bundle([[510, 408], [605, 353]], [-1, 2])} stroke="#5a46c8" />
        <path d="${([[756, 301], [782, 318], [809, 333], [825, 342], [852, 358], [664, 320], [700, 299]] as P[]).map((p) => rise(p, 9, 6)).join("")}" stroke="#08146e" stroke-width="1.200" />
        ${BRANCHES.map(([a, , c]) => svg`<path d=${poly([a, c])} stroke="#3a63dc" stroke-width="6" /><path d=${poly([a, c])} stroke="#6a3fc0" stroke-width="3.500" stroke-dasharray="2 1.500" />`)}
      </g>
      ${BRANCHES.map(([a, m, c]) => svg`${terminal(a, false)}${terminal(c, true)}
        <path d="${[a, lerp(a, m, .3), lerp(a, m, .6), lerp(a, m, .85), m, lerp(m, c, .35), lerp(m, c, .65), c].map((p) => tile(p, 5, 3)).join("")}${tile(m, 8, 5)}" fill="#19eaf0" stroke="#1370d0" stroke-width=".7" />
        <g transform="translate(${a[0] + 7} ${a[1] - 10}) rotate(30)"><text class="tag" x="3" y="0">50 Pa</text><text class="tag" x="0" y="7">150.00 m3/h</text></g>
        <path d="M${a[0] + 2} ${a[1] - 17}l9 3-3 8-9-3z" fill="#19eaf0" stroke="#17a0b8" stroke-width=".6" />`)}
      <path d="M503 412l6-8 12-3-8 8zM616 271l14-7-10 11z" fill="#19eaf0" stroke="#2070b0" stroke-width=".8" />
      <path d="${tile([721, 285], 5, 3)}${tile([733, 285], 5, 3)}${tile([727, 282], 5, 3)}${tile([727, 288], 5, 3)}${tile([885, 380], 6, 3)}${tile([890, 377], 4, 3)}" fill="#19eaf0" stroke="#08449c" stroke-width=".7" />

      <g fill="none" stroke-linejoin="round">
        <path d="M630 405V532Q630 544 645 545M666 405V532Q668 546 655 547" stroke="#9aa6c8" stroke-width="2.200" />
        <path d="M626 403l21-13 22 13-3 12-19 9-18-9zM626 403l21 10 22-10M647 390v34M630 398l17 9 18-9M626 415l21-10 21 10M636 396v22M658 396v22" fill="#aebdf0" fill-opacity=".35" stroke="#5f86e8" stroke-width="1.500" />
        <path d="M626 466l21-11 22 11v23l-22 11-21-11z" fill="#6f97f2" fill-opacity=".7" stroke="#2f66e6" />
        <path d=${hatch(628, 668, () => 463, () => 492, 2)} stroke="#2f5fd0" stroke-width=".7" />
        <path d=${RINGS} stroke="#3d72ea" stroke-width="2.200" />
        <path d=${RINGS} stroke="#08146e" />

        <path d="M663 507L727 470 772 493 772 509 683 560 663 547z" fill="#9dbaf6" fill-opacity=".3" stroke="#3d72ea" stroke-width="2.200" />
        <path d=${hatch(665, 692, (x) => 509 - (x - 663) * .5, (x) => 549 - (x - 663) * .35, 3)} stroke="#3a62d8" />
        <path d=${hatch(702, 736, (x) => 508 - (x - 700) * .55, (x) => 540 - (x - 700) * .55, 4)} stroke="#3a62d8" />
        <path d="M683 520V560M683 520L754 481M663 507L683 520M695 488V546M714 478V540M727 471V532M735 491V528M754 481V517M772 493V509M663 547L727 509 772 509M680 497l34 23M695 488l-10 40M695 515l19 25M714 478l21 50M727 471l27 46M695 540l19-32M714 530l21-39M735 522l19-41M702 494l34-2M663 526L754 478" stroke="#3d72ea" stroke-width="1.800" />
        <path d="M683 561L772 510M664 547L683 559M664 507v40M683 521v38" stroke="#0b1d8f" stroke-width="1.200" />
        <path d="M668 515l16 9v24l-16-9zM672 511l14 9v22M680 500h30M700 505l12 24M706 500l-8 34" stroke="#0b1d8f" />
        <g stroke="#14309c" stroke-width="1.400"><ellipse cx="713" cy="488" rx="8" ry="5" /><ellipse cx="736" cy="495" rx="8" ry="5" /><ellipse cx="745" cy="510" rx="8" ry="6" transform="rotate(-35 745 510)" /></g>
        <path d="M755 488q10-12 16-4t1 12M758 480q8-5 12 0" stroke="#4f7fe8" stroke-width="1.500" />

        <path d="M575 577L636 543 654 553V572L594 609 575 598zM654 553L683 540M654 572L683 556M636 543L663 530" stroke="#5b94d8" stroke-width="1.800" />
        <path d="M600 560L619 549 636 543 638 587 619 597 600 586z" fill="#6f97f2" fill-opacity=".75" />
        <path d=${hatch(602, 638, (x) => 560 - (x - 600) * .4, (x) => 594 - Math.abs(x - 619) * .4, 2)} stroke="#2f5fd0" stroke-width=".7" />
        <path d="M575 577l19 11v21l-19-11z" fill="#5f8cf0" stroke="#1c3fb0" stroke-width="1.600" />
        <path d="M593 569l18 11v18l-18-10zM600 560l20 12v25l-20-12zM618 549l20 12v26l-20-12zM637 543l17 10v19l-17-11zM577 580l15 9v17" stroke="#0b1d8f" stroke-width="1.200" />
      </g>
      <path d="${TILES.map((p) => tile(p)).join("")}${POSTS.map(post).join("")}" fill="#19eaf0" stroke="#1a86d0" stroke-width=".7" />

      <g fill="none" stroke="#333"><path d="M221 605V580M221 605L199 592M221 605L244 592" /><ellipse cx="221" cy="605" rx="4" ry="2" /></g>
      <g class="axis"><text x="200" y="590">Y</text><text x="223" y="579">Z</text><text x="246" y="592">X</text></g>
      <g class="wind"><text transform="translate(963 214) rotate(-30)">W</text><text transform="translate(1022 208) rotate(30)">S</text></g>
      <g stroke="#5e6168" stroke-linejoin="round"><path d="M998 154l21 12-20 11-22-11z" fill="#f3f3f5" /><path d="M977 166l22 11v25l-22-13z" fill="#e6e6ea" /><path d="M999 177l20-11v23l-20 13z" fill="#ededf0" /></g>
      <g class="cube"><text transform="translate(999 168) rotate(-28)">OBEN</text><text transform="translate(987 186) rotate(28)">LINKS</text><text transform="translate(1010 187) rotate(-28)">VORNE</text></g>
      <path d="M969 177l6-4M970 173l5 5M1022 173l6 4M1027 173l-4 5" stroke="#b5b5ba" stroke-width="1.500" />`;
  }

  render() {
    return html`
      <svg class="scene" viewBox="189 111 861 507" preserveAspectRatio="xMidYMid meet">${this.scene()}</svg>
      <span class="caption">[−][ISO-Ansicht SW][2D-Drahtkörper]</span>
      <div class="winctl">
        <button aria-label="Minimieren"><svg viewBox="0 0 8 8"><path d="M.5 4.500h7v2h-7z" fill="none" stroke="#444" /></svg></button>
        <button aria-label="Maximieren"><svg viewBox="0 0 8 8"><path d="M.5 2.500h5v5h-5zM2.500 2.500v-2h5v5h-2M2.500 5h1" fill="none" stroke="#444" /></svg></button>
        <button aria-label="Schließen"><svg viewBox="0 0 8 8"><path d="M.5.5h7v7h-7zM2 2l4 4M6 2L2 6" fill="none" stroke="#444" /></svg></button>
      </div>
      <button class="ucs">WKS <svg class="caret" viewBox="0 0 6 4"><path d="M1 0h4L3 3z" fill="none" stroke="#a9a7b8" /></svg></button>`;
  }
}

/* ---------- LINEAR palette ---------- */

const DISC = ["Architektur", "Heizung", "Trinkwasser", "Abwasser", "Kälte", "*Lüftung (Modell)", "Gas", "Elektro", "Brandschutz", "Flächentemperierung",
  "Dachentwässerung", "Schlitz- und Durchbruchsplanung", "Befestigungsplanung", "#Planungstyp", "3D - Grundrissplanung", "2D - Grundrissplanung",
  "2D - Schemaplanung", "2D - Detailplanung", "=3D - Modellplanung"];

const SIDE: Record<string, SVGTemplateResult> = {
  info: svg`<path d="M1 1h5v11H1z" fill="#dfe6ee"/><path d="M2 1v11M4 1v11" stroke="#39424f"/><path d="M5 2h7v4H5z" fill="none" stroke="#eee"/><path d="M5 6h7v6H5z" fill="#c9dcec" stroke="#fff" stroke-width=".7"/>`,
  disc: svg`<path d="M1 1h10v10H1z" fill="#f1f3f6"/><path d="M2.500 3.500h1.500M2.500 6h1.500M2.500 8.500h1.500M5 3.500h5M5 6h5M5 8.500h5" stroke="#5b6bb0"/>`,
  floor: svg`<path d="M1 4l2-3h6l2 3v7H1z" fill="#5cb8e4"/><path d="M0 4h12M1 6.500h10M1 9h10M1 11.500h10" stroke="#f1f7fb"/>`,
  plant: svg`<path d="M1 1h4v3H1zM3 4v6h4M3 6h4" fill="none" stroke="#f1f3f6" stroke-width="1.200"/><path d="M7 4h5v3H7zM7 8h5v3.500H7z" fill="#8ecbf0"/>`,
  spool: svg`<path d="M3 0v12M9 0v12M0 11h3" stroke="#f1f3f6" stroke-width="1.200"/><path d="M3 6h9" stroke="#4fb6ea" stroke-width="1.500"/>`,
  memo: svg`<path d="M1 1l8 1-1 9-7 1z" fill="#dde1e6"/><path d="M4 5h7v7H4z" fill="#f6f7f8"/><path d="M3 3h3v3H3z" fill="#3b4453"/><path d="M6 8h4M6 10h3" stroke="#667"/>`,
};

@customElement("linear-palette")
class LinearPalette extends LitElement {
  static styles = [shared, css`
    :host { display: flex; flex-direction: column; width: 150px; background: #495069; color: #eef0f4; min-height: 0; border-left: 1px solid #2a2f3a;
      font: 7px/10px "Liberation Sans", sans-serif; }
    .name { height: 19px; background: #212931; display: flex; align-items: center; gap: 4px; padding-left: 6px; font: 7px/10px "Noto Sans", sans-serif; }
    .name svg { width: 8px; height: 9px; }
    .modes { display: grid; grid-template-columns: repeat(5, 1fr); height: 22px; background: #212931; }
    .modes button { justify-content: center; }
    .modes button.on { background: #495069; border-top: 1px solid #cfd4dd; }
    .modes svg { width: 17px; height: 17px; }
    h2 { font: 7px/10px "Noto Sans", sans-serif; margin: 4px 7px 1px; }
    .box { background: #333c49; margin: 0 7px 4px 6px; padding: 1px 6px 0 5px; flex: 1; min-height: 0; overflow: hidden; }
    .head { display: flex; width: 100%; height: 15px; gap: 2px; font: 7px/10px "Noto Sans", sans-serif; }
    .head span { flex: 1; text-align: left; }
    .head .caret { width: 5px; transform: rotate(180deg); margin-right: 1px; }
    ul { list-style: none; margin: 1px 0 0; padding: 0; background: #3b4453; display: grid; grid-auto-rows: 1fr; align-content: start; }
    .disc { height: 203px; }
    .floor, .plant { grid-auto-rows: 11px; }
    .floor { height: 55px; }
    .plant { height: 34px; }
    .spool { height: 54px; }
    li { display: flex; align-items: center; padding-left: 12px; white-space: nowrap; position: relative; }
    li.cat { padding-left: 3px; }
    li.sel { background: #4c566d; margin-left: 12px; padding-left: 0; }
    li .ico { position: absolute; left: -13px; }
  `];
  private head(icon: string, label: string, open = true) {
    return html`<button class="head"><svg class="ico" viewBox="0 0 12 12">${SIDE[icon]}</svg><span>${label}</span>${open ? caret : nothing}</button>`;
  }
  private items(cls: string, list: string[]) {
    return html`<ul class=${cls}>${list.map((t) => {
      const m = /^[*#=]/.test(t) ? t[0] : "";
      return html`<li class=${classMap({ sel: m === "*" || m === "=", cat: m === "#" })}>${m === "*" ? ico("bulb") : nothing}${m ? t.slice(1) : t}</li>`;
    })}</ul>`;
  }
  render() {
    return html`
      <div class="name"><svg viewBox="0 0 8 9"><path d="M3 0L0 2v6l3-1zM4 1h3l1 2v3H6V3H4z" fill="#e4e8ee" /></svg>LINEAR</div>
      <div class="modes">
        <button class="on" aria-label="Projekt"><svg viewBox="0 0 17 17"><path d="M2 4h14M2 8.500h14M2 13h14" stroke="#fff" stroke-width="1.500" /></svg></button>
        <button aria-label="Bearbeiten"><svg viewBox="0 0 17 17"><path d="M10 2.500H2v12.500h13V8M6 11l1-3 7-7 2 2-7 7z" fill="none" stroke="#fff" stroke-width="1.100" /></svg></button>
        <button aria-label="Berechnen"><svg viewBox="0 0 17 17"><path d="M3 1.500h11v14H3zM3 6h11M5 3.800h7" fill="none" stroke="#fff" stroke-width="1.100" /><path d="M5 9h8M5 11.200h8M5 13.400h8" stroke="#fff" stroke-width="1.300" stroke-dasharray="1.500 1.200" /></svg></button>
        <button aria-label="Dokument"><svg viewBox="0 0 17 17"><path d="M3 1.500h7l4 5v9H3zM10 1.500v5h4" fill="none" stroke="#fff" stroke-width="1.100" /></svg></button>
        <button aria-label="Auswahl"><svg viewBox="0 0 17 17"><path d="M1.500 5V1.500H5M12 1.500h3.500V5M15.500 12v3.500H12M5 15.500H1.500V12M7 1.500h3M7 15.500h3" fill="none" stroke="#fff" /><path d="M4 8.500h9" stroke="#fff" stroke-width="1.500" stroke-dasharray="2 1.500" /></svg></button>
      </div>
      <h2>Projekt</h2>
      <div class="box">
        ${this.head("info", "Projektinformationen ...", false)}
        ${this.head("disc", "Disziplinen ...")}${this.items("disc", DISC)}
        ${this.head("floor", "Geschosse ...")}${this.items("floor", ["=Erdgeschoss"])}
        ${this.head("plant", "Anlagen ...")}${this.items("plant", ["=Keine Anlage"])}
        ${this.head("spool", "Spools/Sektionen ...")}${this.items("spool", ["*Ausführungsplanung", "3D-Ausführungsplanung", "Detailplanung", "Schemaplanung", "Schlitzplanung"])}
        ${this.head("memo", "Memo ...", false)}
      </div>`;
  }
}

/* ---------- video player bar ---------- */

@customElement("player-bar")
class PlayerBar extends LitElement {
  @property({ type: Number }) duration = 196;
  @state() private time = 108;
  static styles = [shared, css`
    :host { display: flex; align-items: center; height: 35px; background: #fff; color: #222; padding: 0 8px 0 3px; font: 6px/10px "Open Sans", sans-serif; }
    .play { width: 29px; height: 29px; border-radius: 50%; background: #1b3a44; justify-content: center; }
    .play svg { width: 15px; height: 16px; }
    time { width: 52px; margin-left: 12px; white-space: nowrap; }
    input { flex: 1; min-width: 0; height: 10px; appearance: none; background: linear-gradient(#1b3a44, #1b3a44) left center / var(--done) 2px no-repeat, linear-gradient(#c9cbcd, #c9cbcd) center / 100% 1px no-repeat; }
    input::-webkit-slider-thumb { appearance: none; width: 9px; height: 9px; border-radius: 50%; background: #000; }
    .tools { display: flex; gap: 14px; margin-left: 66px; align-items: center; }
    .tools svg { width: 17px; height: 17px; display: block; fill: none; stroke: #1c1c1c; }
  `];
  private fmt(s: number) {
    return `${String(Math.floor(s / 60)).padStart(2, "0")}:${String(s % 60).padStart(2, "0")}`;
  }
  render() {
    return html`
      <button class="play" aria-label="Abspielen"><svg viewBox="0 0 15 16"><path d="M3 1l11 7-11 7z" fill="#fff" /></svg></button>
      <time>${this.fmt(this.time)} / ${this.fmt(this.duration)}</time>
      <input type="range" aria-label="Position" min="0" .max=${String(this.duration)} .value=${String(this.time)}
        style=${styleMap({ "--done": `${(this.time / this.duration) * 100}%` })}
        @input=${(e: Event) => (this.time = Number((e.target as HTMLInputElement).value))} />
      <div class="tools">
        <button aria-label="Einstellungen"><svg viewBox="0 0 17 17"><path d="M7 2h3l.5 2 1.600.7L14 3.800l1.600 2.400-1.300 1.500v1.600l1.300 1.500L14 13.200l-1.900-.7-1.600.7L10 15H7l-.5-1.800-1.600-.7-1.900.7-1.600-2.400 1.300-1.500V7.700L1.400 6.200 3 3.800l1.900.9L6.500 4z" /><circle cx="8.500" cy="8.500" r="2.600" /></svg></button>
        <button aria-label="Geschwindigkeit"><svg viewBox="0 0 18 17"><path d="M1 4v9h3M1 4h2" stroke="#888" /><path d="M6 13V4l4 2M6 13l4-2M12 4v9l6-4.500z" /></svg></button>
        <button aria-label="Lautstärke"><svg viewBox="0 0 17 17"><path d="M1 6.500v4h3l6 4v-12l-6 4zM12 6q2 2.500 0 5M14 3.500q3 5 0 10" stroke-width="1.200" /></svg></button>
        <button aria-label="Vollbild beenden"><svg viewBox="0 0 17 17"><path d="M15 2l-5 5M10 3v4h4M2 15l5-5M3 10h4v4" stroke-width="1.500" /></svg></button>
      </div>`;
  }
}

/* ---------- page ---------- */

@customElement("app-root")
class AppRoot extends LitElement {
  static styles = [shared, css`
    :host { display: flex; flex-direction: column; height: 100vh; overflow: hidden; background: #212931; }
    main { flex: 1; min-height: 0; display: grid; grid-template-columns: auto minmax(0, 1fr) auto; grid-template-rows: minmax(0, 1fr); }
    .center { display: flex; flex-direction: column; min-height: 0; min-width: 0; }
    model-view { flex: 1; }
    .cmd { height: 22px; flex: none; display: flex; border-top: 1px solid #15171b; background: #2b3039; padding-top: 1px; }
    .side { width: 15px; display: flex; flex-direction: column; align-items: center; gap: 3px; padding-top: 2px; }
    .side i { width: 11px; height: 4px; background: repeating-linear-gradient(90deg, #b9bdc6 0 1px, transparent 1px 2px); }
    .side svg { width: 6px; height: 6px; }
    pre { flex: 1; margin: 0; padding: 3px 2px 0; background: #c8c5ca; color: #111; font: 7px/9px "DejaVu Sans Mono", monospace; overflow: hidden; }
  `];
  render() {
    return html`
      <cad-ribbon></cad-ribbon>
      <main>
        <property-palette></property-palette>
        <div class="center">
          <model-view></model-view>
          <div class="cmd">
            <div class="side"><i></i><button aria-label="Schließen"><svg viewBox="0 0 8 8"><path d="M1 1l6 6M7 1L1 7" stroke="#fff" stroke-width="1.600" /></svg></button></div>
            <pre>Befehl: *Abbruch*
Befehl:  Objekte werden gewählt...fertig.</pre>
          </div>
        </div>
        <linear-palette></linear-palette>
      </main>
      <player-bar></player-bar>`;
  }
}
